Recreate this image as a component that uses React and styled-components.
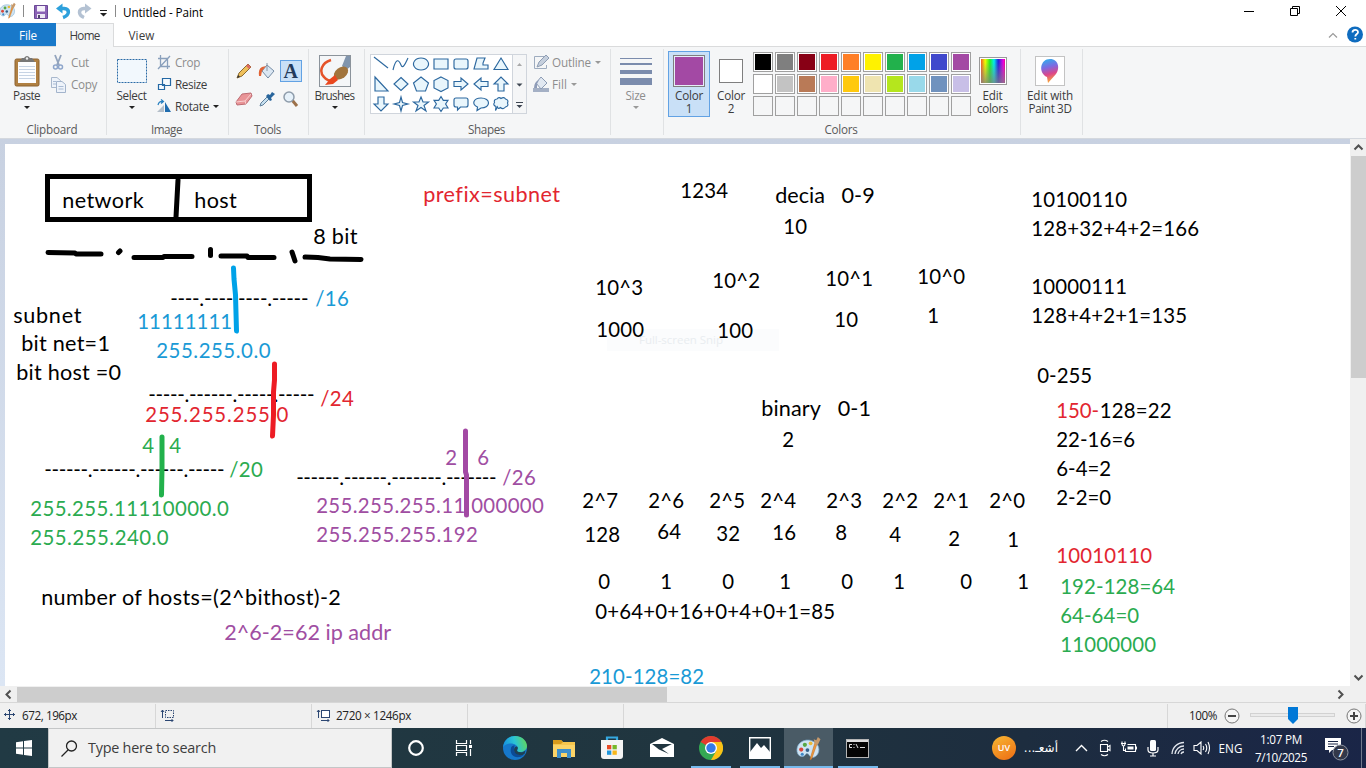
import React, { useLayoutEffect, useRef, useState } from "react";
import styled, { createGlobalStyle } from "styled-components";

const Global = createGlobalStyle`
  * { box-sizing: border-box; }
  body { margin: 0; overflow: hidden; background: #fff; }
  svg { flex: none; }
`;

const UI = `"Open Sans", "Noto Sans", sans-serif`;

/* ---------- text that is tracked to a given advance width ---------- */
const TextSpan = styled.span`
  display: inline-block;
  white-space: pre;
  flex: none;
`;
function Fit({ w, children }) {
  const ref = useRef(null);
  const [ls, setLs] = useState(0);
  useLayoutEffect(() => {
    if (!w) return;
    const el = ref.current;
    const natural = el.getBoundingClientRect().width;
    setLs((w - natural) / el.textContent.length);
  }, [w]);
  return <TextSpan ref={ref} style={w ? { letterSpacing: ls } : undefined}>{children}</TextSpan>;
}

/* ---------- window frame ---------- */
const Window = styled.div`
  width: 1366px;
  height: 768px;
  display: flex;
  flex-direction: column;
  font: 11.7px/14px ${UI};
  color: #333;
  background: #fff;
  overflow: hidden;
`;
const TitleBar = styled.header`
  height: 23px;
  flex: none;
  display: flex;
  align-items: center;
  color: #000;
`;
const QuickIcons = styled.div`
  width: 123px;
  height: 23px;
  flex: none;
`;
const Spacer = styled.div`flex: 1;`;
const Caption = styled.div`
  width: 46px;
  height: 22px;
  display: flex;
  align-items: center;
  justify-content: center;
`;
const TabRow = styled.nav`
  height: 24px;
  flex: none;
  display: flex;
  border-bottom: 1px solid #dadbdc;
`;
const Tab = styled.div`
  width: ${(p) => p.$w}px;
  height: ${(p) => (p.$kind === "home" ? 24 : 23)}px;
  display: flex;
  align-items: center;
  justify-content: center;
  color: ${(p) => (p.$kind === "file" ? "#fff" : "#3c3c3c")};
  background: ${(p) => (p.$kind === "file" ? "#1979ca" : p.$kind === "home" ? "#f5f6f7" : "#fff")};
  border: solid #dadbdc;
  border-width: ${(p) => (p.$kind === "home" ? "1px 1px 0 0" : "0")};
  padding-bottom: ${(p) => (p.$kind === "home" ? 2 : 0)}px;
`;
const TabTools = styled.div`
  display: flex;
  align-items: center;
`;

/* ---------- ribbon ---------- */
const Ribbon = styled.section`
  height: 91px;
  flex: none;
  display: flex;
  background: #f5f6f7;
  padding: 2px 0 3px;
`;
const Group = styled.div`
  width: ${(p) => p.$w}px;
  height: 86px;
  flex: none;
  display: flex;
  flex-direction: column;
  border-right: 1px solid #e0e2e4;
`;
const GroupBody = styled.div`
  height: 73px;
  display: flex;
  padding: ${(p) => p.$pad || "2px 0 0"};
`;
const GroupLabel = styled.div`
  height: 13px;
  line-height: 15px;
  display: flex;
  justify-content: center;
  padding-right: 2px;
  color: #5a5a5a;
`;
const BigButton = styled.div`
  width: ${(p) => p.$w}px;
  height: 66px;
  flex: none;
  display: flex;
  flex-direction: column;
  align-items: center;
  color: ${(p) => (p.$dim ? "#8d8d8d" : "#3c3c3c")};
  background: ${(p) => (p.$on ? "#c9e0f7" : "none")};
  border: ${(p) => (p.$on ? "1px solid #62a2e4" : "1px solid transparent")};
  line-height: 13px;
`;
const IconSlot = styled.div`
  height: 37px;
  flex: none;
  display: flex;
  align-items: center;
  justify-content: center;
`;
const Arrow = styled.i`
  width: 0;
  height: 0;
  flex: none;
  margin: ${(p) => p.$m || "4px 0 0"};
  border: 3px solid transparent;
  border-top: 3px solid ${(p) => p.$c || "#222"};
  border-bottom: 0;
`;
const Commands = styled.div`
  display: flex;
  flex-direction: column;
  margin-top: ${(p) => p.$up || 0}px;
`;
const Command = styled.div`
  height: 22px;
  display: flex;
  align-items: center;
  color: ${(p) => (p.$dim ? "#8d8d8d" : "#3c3c3c")};
`;
const CommandIcon = styled.div`
  width: ${(p) => p.$w}px;
  display: flex;
`;
const ToolGrid = styled.div`
  display: grid;
  grid-template-columns: repeat(3, 23.5px);
  grid-auto-rows: 28px;
`;
const ToolCell = styled.div`
  display: flex;
  align-items: center;
  justify-content: center;
`;
const TextTool = styled.div`
  width: 22px;
  height: 22px;
  flex: none;
  border: 1px solid #62a2e4;
  background: #c9e0f7;
  color: #233a5c;
  font: bold 20px/20px "Liberation Serif", serif;
  text-align: center;
`;
const Gallery = styled.div`
  width: 157px;
  height: 60px;
  flex: none;
  display: flex;
  border: 1px solid #d0d5dc;
  background: #fff;
`;
const ShapeGrid = styled.div`
  display: grid;
  grid-template-columns: repeat(7, 20px);
  grid-auto-rows: 20px;
  width: 141px;
  margin-top: -1px;
`;
const GalleryScroll = styled.div`
  width: 14px;
  border-left: 1px solid #d0d5dc;
  background: #f5f6f7;
  display: flex;
`;
const Preview = styled.div`
  width: ${(p) => p.$s}px;
  height: ${(p) => p.$s}px;
  border: 1px solid #7f7f7f;
  outline: ${(p) => (p.$ring ? "1px solid #e6eef8" : "none")};
  outline-offset: -2px;
  background: ${(p) => p.$c};
`;
const Palette = styled.div`
  display: grid;
  grid-template-columns: repeat(10, 20px);
  grid-auto-rows: 20px;
  gap: 2px;
  width: 218px;
  flex: none;
  padding-top: 1px;
`;
const Swatch = styled.div`
  border: 1px solid #a0a0a0;
  background: ${(p) => p.$c || "#f5f6f7"};
  box-shadow: inset 0 0 0 1px ${(p) => (p.$c ? "#fff" : "#f5f6f7")};
`;
const Spectrum = styled.div`
  width: 28px;
  height: 28px;
  border: 1px solid #999;
  box-shadow: inset 0 0 0 1px #fff;
  background:
    linear-gradient(to bottom, transparent 15%, #808080cc),
    linear-gradient(90deg, #e33, #ef0 20%, #2e2 38%, #0ee 54%, #22d 70%, #e0d 90%, #e05);
`;

/* ---------- workspace ---------- */
const Workspace = styled.main`
  height: 548px;
  flex: none;
  display: flex;
  border-top: 1px solid #d4d8de;
`;
const Desk = styled.div`
  width: 1350px;
  height: 547px;
  padding: 5px 0 0 5px;
  background: linear-gradient(#c8d1e1, #dce6f4);
`;
const Canvas = styled.div`
  position: relative;
  width: 1345px;
  height: 542px;
  background: #fff;
  overflow: hidden;
`;
const Note = styled.div`
  position: absolute;
  left: ${(p) => p.$x - 4.8}px;
  top: ${(p) => p.$b - 166}px;
  font: ${(p) => (p.$words ? 21.6 : 20.4)}px/29px Lato, sans-serif;
  color: ${(p) => p.$c || "#000"};
`;
const Ink = styled.svg`
  position: absolute;
  left: 0;
  top: 0;
`;
const SnipGhost = styled.div`
  position: absolute;
  left: 602px;
  top: 185px;
  width: 172px;
  height: 22px;
  padding-left: 32px;
  background: #fbfcfd;
  color: #e9edf0;
  font: 11.5px/22px ${UI};
`;
const VScroll = styled.div`
  width: 16px;
  height: 547px;
  background: #f0f0f0;
  display: flex;
  flex-direction: column;
  align-items: center;
`;
const VThumb = styled.div`
  width: 15px;
  height: 222px;
  background: #cdcdcd;
`;
const HScroll = styled.div`
  height: 16px;
  flex: none;
  display: flex;
  align-items: center;
  background: #f0f0f0;
`;
const HThumb = styled.div`
  width: 650px;
  height: 15px;
  background: #cdcdcd;
`;
const ArrowBox = styled.div`
  width: 17px;
  height: 17px;
  flex: none;
  display: flex;
  align-items: center;
  justify-content: center;
`;
const StatusBar = styled.footer`
  height: 26px;
  flex: none;
  display: flex;
  border-top: 1px solid #d7d7d7;
  background: #f0f0f0;
  color: #222;
`;
const StatusCell = styled.div`
  width: ${(p) => p.$w}px;
  height: 24px;
  margin-top: 1px;
  padding-bottom: 2px;
  display: flex;
  align-items: center;
  gap: ${(p) => p.$gap || 6}px;
  padding-left: ${(p) => p.$pl || 0}px;
  border-right: 1px solid #d7d7d7;
`;

/* ---------- taskbar ---------- */
const Taskbar = styled.div`
  height: 40px;
  flex: none;
  display: flex;
  color: #fff;
  background: linear-gradient(90deg, #213a44 0%, #20353f 50%, #1d2d3f 75%, #1a2547 100%);
`;
const Start = styled.div`
  width: 48px;
  display: flex;
  align-items: center;
  justify-content: center;
`;
const Search = styled.div`
  width: 344px;
  height: 40px;
  display: flex;
  align-items: center;
  gap: 10px;
  padding-left: 12px;
  border: 1px solid #c4c6c7;
  background: #f1f1f1;
  color: #3d3d3d;
  font: 14.4px/20px ${UI};
`;
const TaskButton = styled.div`
  width: ${(p) => p.$w}px;
  height: 40px;
  flex: none;
  display: flex;
  align-items: center;
  justify-content: center;
  background-color: ${(p) => (p.$active ? "#4a5b66" : "transparent")};
  background-image: ${(p) => (p.$run ? "linear-gradient(#76b9ed, #76b9ed)" : "none")};
  background-size: ${(p) => (p.$active ? "100%" : "40px")} 2px;
  background-position: center bottom;
  background-repeat: no-repeat;
`;
const Tray = styled.div`
  display: flex;
  height: 40px;
  align-items: center;
`;
const TrayItem = styled.div`
  width: ${(p) => p.$w}px;
  display: flex;
  justify-content: center;
`;
const Weather = styled.div`
  width: 24px;
  height: 24px;
  border-radius: 50%;
  background: linear-gradient(150deg, #f7b733, #ee6c13);
  font: 600 9px/24px ${UI};
  text-align: center;
`;
const Arabic = styled.div`
  width: 34px;
  margin: 0 11px 0 8px;
  font: 12px/18px "DejaVu Sans", sans-serif;
  white-space: nowrap;
`;
const Clock = styled.div`
  width: 64px;
  text-align: center;
  font: 11.7px/18px ${UI};
`;
const ShowDesktop = styled.div`
  width: 5px;
  height: 40px;
  border-left: 1px solid #71798c;
`;

const BLUE = "#00a2e8", RED = "#ed1c24", GREEN = "#22b14c", PURPLE = "#a349a4";
/* darker tints for the typed text */
const tb = "#1a9ad6", tr = "#e22630", tg = "#2bab50", tp = "#a04ea2";

/* text, x, baseline, width, colour */
const D = 11.9;
const NOTES = [
  ["network", 62, 208, 82], ["host", 194, 208, 43], ["8 bit", 313, 244, 44.5],
  ["prefix=subnet", 423, 202, 137, tr],
  ["----.---- ----.-----", 170, 306, 138], ["/16", 315, 306, 34, tb],
  ["11111111", 137, 329, 95, tb], ["255.255.0.0", 156, 358, 115, tb],
  ["subnet", 13, 323, 69], ["bit net=1", 21, 351, 89], ["bit host =0", 16, 380, 105],
  ["-----.------.-----.-----", 148, 402, 166], ["/24", 320, 406, 34, tr],
  ["255.255.255.0", 145, 422, 144, tr],
  ["4", 142, 453, D, tg], ["4", 169, 453, D, tg],
  ["------.------.------.-----", 44, 477, 180], ["/20", 229, 477, 34, tg],
  ["255.255.11110000.0", 30, 516, 199, tg], ["255.255.240.0", 30, 545, 139, tg],
  ["2", 445, 465, D, tp], ["6", 477, 465, D, tp],
  ["------.------.-------.-------", 296, 485, 200], ["/26", 502, 485, 34, tp],
  ["255.255.255.11 000000", 316, 513, 228, tp], ["255.255.255.192", 316, 542, 162, tp],
  ["number of hosts=(2^bithost)-2", 41, 605, 300], ["2^6-2=62 ip addr", 224, 640, 167, tp],
  ["1234", 680, 198, 48], ["decia   0-9", 775, 203, 99.5], ["10", 783, 234, 24],
  ["10^3", 595, 295, 48], ["10^2", 712, 288, 48], ["10^1", 825, 286, 48], ["10^0", 917, 284, 48],
  ["1000", 596, 337, 48], ["100", 717, 338, 36], ["10", 834, 327, 24], ["1", 927, 323, D],
  ["binary   0-1", 761, 416, 110], ["2", 782, 447, D],
  ["2^7", 582, 508, 36], ["2^6", 648, 508, 36], ["2^5", 709, 508, 36], ["2^4", 760, 508, 36],
  ["2^3", 826, 508, 36], ["2^2", 882, 508, 36], ["2^1", 933, 508, 36], ["2^0", 989, 508, 36],
  ["128", 584, 542, 36], ["64", 657, 539, 24], ["32", 716, 541, 24], ["16", 772, 540, 24],
  ["8", 835, 540, D], ["4", 889, 542, D], ["2", 948, 546, D], ["1", 1007, 547, D],
  ["0", 598, 589, D], ["1", 660, 589, D], ["0", 722, 589, D], ["1", 779, 589, D],
  ["0", 841, 589, D], ["1", 893, 589, D], ["0", 960, 589, D], ["1", 1017, 589, D],
  ["0+64+0+16+0+4+0+1=85", 595, 619, 240], ["210-128=82", 589, 684, 115, tb],
  ["10100110", 1031, 207, 96], ["128+32+4+2=166", 1031, 236, 168],
  ["10000111", 1031, 294, 96], ["128+4+2+1=135", 1031, 323, 156],
  ["0-255", 1037, 383, 55], ["150-", 1056, 418, 43, tr], ["128=22", 1099.5, 418, 72],
  ["22-16=6", 1056, 447, 79], ["6-4=2", 1056, 476, 55], ["2-2=0", 1056, 505, 55],
  ["10010110", 1056, 563, 96, tr], ["192-128=64", 1060, 594, 115, tg],
  ["64-64=0", 1060, 623, 79, tg], ["11000000", 1060, 652, 96, tg],
];

const STROKES = [
  ["#000", "M178 180 L176 217"], ["#000", "M48 252.5 L75 253 76 254 101 254"],
  ["#000", "M118.5 252.5 L120 251"], ["#000", "M134 257.5 L163 257.5 164 256.5 192 256.5"],
  ["#000", "M210.5 249.5 V255.5"], ["#000", "M221 256 H247 L248 257.5 H274"],
  ["#000", "M292 252 L295 261"], ["#000", "M305 257 L318 257.5 330 259 361 259.5"],
  [BLUE, "M233.5 268 L234 279 235.5 295 236.5 331"], [RED, "M274.5 364 V380 L273.5 392 V415 L272.5 436"],
  [GREEN, "M162 437 V468 L161.5 495"], [PURPLE, "M465.5 431 V472 L466.5 475 V515"],
];

const SHAPES = [
  "M3 3 L17 14", "M2 16 C5 3 8 6 10 11 S15 8 17 4", "M10 4 a7.5 6 0 1 0 .01 0Z", "M3 5 H17 V15 H3Z",
  "M5 5 H15 Q17 5 17 7 V13 Q17 15 15 15 H5 Q3 15 3 13 V7 Q3 5 5 5Z", "M6 4 H14 L12 9 V11 H17 V15 H3Z", "M10 4 L17 15.5 H3Z",
  "M4 3 L17 17 H4Z", "M10 3.5 L17 10 L10 16.5 L3 10Z", "M10 3 L17.5 9 L14.5 17 H5.5 L2.5 9Z",
  "M10 3 L17 6.5 V14 L10 17.5 L3 14 V6.5Z", "M3 7.5 H10 V4 L17 10 L10 16 V12.5 H3Z",
  "M17 7.5 H10 V4 L3 10 L10 16 V12.5 H17Z", "M7 17 V10 H3 L10 3 L17 10 H13 V17Z",
  "M7 3 V10 H3 L10 17 L17 10 H13 V3Z", "M10 3 L11.5 8.5 L17 10 L11.5 11.5 L10 17 L8.5 11.5 L3 10 L8.5 8.5Z",
  "M10 3 L12 8 H17.5 L13 11.5 L15 17 L10 13.5 L5 17 L7 11.5 L2.5 8 H8Z",
  "M10 2.5 L12.3 6.3 H17 L14.6 10 L17 14 H12.3 L10 17.5 L7.7 14 H3 L5.4 10 L3 6.3 H7.7Z",
  "M5 4 H15 Q17 4 17 6 V11 Q17 13 15 13 H9.5 L6.5 16 V13 H5 Q3 13 3 11 V6 Q3 4 5 4Z",
  "M10 4 C20 4 20 14 10 14 L6 16.5 L6.5 13 C0 10.5 2.5 4 10 4Z",
  "M6 5 Q8 2.5 10 4.5 Q13 2.5 14.5 5 Q18 6 16.5 9 Q18 12 14.5 13 Q12 16 9.5 13.5 Q7 15.5 6.5 13 L4.5 16.5 L5 12.5 Q1.5 11 3.5 8.5 Q2.5 5.5 6 5Z",
];

const COLORS = [
  "#000", "#7f7f7f", "#880015", "#ed1c24", "#ff7f27", "#fff200", "#22b14c", "#00a2e8", "#3f48cc", "#a349a4",
  "#fff", "#c3c3c3", "#b97a57", "#ffaec9", "#ffc90e", "#efe4b0", "#b5e61d", "#99d9ea", "#7092be", "#c8bfe7",
  ...Array(10).fill(null),
];

const PaletteIcon = ({ s = 24 }) => (
  <svg width={s} height={s} viewBox="0 0 24 24">
    <path d="M13 4C5 3 0 9 1 15c1 5 6 6 8 3 1-2 3-1 4 1 3 4 9 0 9-6 0-5-4-8-9-9Z" fill="#cfe4f3" stroke="#7aa9cc" strokeWidth=".7" />
    <circle cx="5" cy="13" r="2" fill="#d9463b" /><circle cx="8.500" cy="8.500" r="2" fill="#58a846" />
    <circle cx="14" cy="7" r="1.800" fill="#e9b93a" /><circle cx="11" cy="13.500" r="1.800" fill="#35618d" />
    <circle cx="6" cy="17.500" r="1.500" fill="#3f86c5" />
    <path d="M20 8 L15 22 L13.500 23 L13.800 21 L18 7Z" fill="#f0993c" stroke="#b86a24" strokeWidth=".5" />
    <path d="M18 8 L17 3 L19.500 4 L21 1 L23.500 3 L21 8.500Z" fill="#c79a6b" />
  </svg>
);

const Chevron = ({ d }) => (
  <svg width="11" height="11" viewBox="0 0 11 11"><path d={d} fill="none" stroke="#505050" strokeWidth="2" /></svg>
);

function TopBar() {
  return (
    <TitleBar>
      <QuickIcons>
        <svg width="123" height="23">
          <g transform="translate(-1,2)"><PaletteIcon s={17} /></g>
          <path d="M23.500 5V17M115.500 5V17" stroke="#8a8a8a" />
          <path d="M34.500 5.500H47.500V18.500H34.500Z" fill="#8b62b5" stroke="#6a4795" />
          <path d="M37 6H45V11.500H37Z" fill="#f4f0fa" /><path d="M37 14H45V18H37Z" fill="#ece7f3" /><path d="M38 15H40V18H38Z" fill="#50456b" />
          <path d="M60 8.500H64C70 9 70 15 63 17.500" fill="none" stroke="#2da0dc" strokeWidth="3.500" />
          <path d="M62.500 3.500V13.500L56 8.500Z" fill="#2da0dc" />
          <path d="M87 8.500H84C78 9 78 15 84 17.500" fill="none" stroke="#b4c2d3" strokeWidth="3.500" />
          <path d="M85 3.500V13.500L91.500 8.500Z" fill="#b4c2d3" />
          <path d="M100 10.500H107" stroke="#222" /><path d="M100 13H107L103.500 16.500Z" fill="#222" />
        </svg>
      </QuickIcons>
      <Fit w={80}>Untitled - Paint</Fit>
      <Spacer />
      <Caption><svg width="12" height="12"><path d="M1 5.500H11" fill="none" stroke="#000" /></svg></Caption>
      <Caption><svg width="12" height="12"><path d="M1.500 2.500H8.500V9.500H1.500ZM3.500 2.500V.500H10.500V7.500H8.500" fill="none" stroke="#000" /></svg></Caption>
      <Caption><svg width="12" height="12"><path d="M1 0L11 10M11 0L1 10" fill="none" stroke="#000" /></svg></Caption>
      <svg width="2" height="2" />
    </TitleBar>
  );
}

function Tabs() {
  return (
    <TabRow>
      <Tab $w={56} $kind="file"><Fit w={18}>File</Fit></Tab>
      <Tab $w={58} $kind="home"><Fit w={30}>Home</Fit></Tab>
      <Tab $w={55}><Fit w={26}>View</Fit></Tab>
      <Spacer />
      <TabTools>
        <svg width="40" height="22">
          <path d="M3 13.500L7 9.500L11 13.500" fill="none" stroke="#9a9a9a" strokeWidth="1.200" />
          <circle cx="29" cy="10.500" r="8" fill="#0f6cbf" />
          <path d="M26.500 8.500C26.500 5 32 5 32 8.200C32 10 29.300 10 29.300 12.500M29.300 14V15.500" fill="none" stroke="#fff" strokeWidth="1.800" />
        </svg>
      </TabTools>
    </TabRow>
  );
}

function RibbonBar() {
  return (
    <Ribbon>
      <Group $w={107}>
        <GroupBody $pad="2px 0 0 5px">
          <BigButton $w={43}>
            <IconSlot>
              <svg width="26" height="32">
                <rect x="1" y="4" width="24" height="27" rx="1.500" fill="#b08042" stroke="#8c6230" />
                <path d="M4 7H22V28H4Z" fill="#fcfdff" /><path d="M5 11.500H21M5 14.500H21M5 17.500H21M5 20.500H21M5 23.500H21" stroke="#c6d3e4" />
                <path d="M5 7L8 3H10Q13 -1 16 3H18L21 7Z" fill="#777" /><circle cx="13" cy="3.500" r="1.200" fill="#eee" />
              </svg>
            </IconSlot>
            <Fit w={27}>Paste</Fit><Arrow />
          </BigButton>
          <Commands>
            <Command $dim><CommandIcon $w={23}>
              <svg width="17" height="17"><path d="M7 1L11 11M13 1L9 11" stroke="#93a4bd" strokeWidth="1.800" /><circle cx="7.500" cy="13" r="2" fill="none" stroke="#8fa6cb" strokeWidth="1.500" /><circle cx="12.500" cy="13" r="2" fill="none" stroke="#8fa6cb" strokeWidth="1.500" /></svg>
            </CommandIcon><Fit w={18}>Cut</Fit></Command>
            <Command $dim><CommandIcon $w={23}>
              <svg width="18" height="17"><path d="M3.500 1.500H9L12.500 4.500V11.500H3.500Z" fill="#eef3fa" stroke="#a9b8cd" /><path d="M8.500 5.500H14L17.500 8.500V16.500H8.500Z" fill="#eef3fa" stroke="#a3b4cc" /><path d="M5 5.500H8M5 8H8M10.500 10.500H15.500M10.500 13H15.500" stroke="#a9bbd4" /></svg>
            </CommandIcon><Fit w={26}>Copy</Fit></Command>
          </Commands>
        </GroupBody>
        <GroupLabel><Fit w={51}>Clipboard</Fit></GroupLabel>
      </Group>

      <Group $w={122}>
        <GroupBody $pad="2px 0 0 3px">
          <BigButton $w={43}>
            <IconSlot><svg width="32" height="26"><rect x="1.500" y="1.500" width="29" height="23" fill="#f2f8fd" stroke="#2a6aa6" strokeDasharray="2 1" /></svg></IconSlot>
            <Fit w={30}>Select</Fit><Arrow />
          </BigButton>
          <Commands>
            <Command $dim><CommandIcon $w={22}><svg width="20" height="16"><path d="M7.500 1V12.500H17M5 4.500H14.500V15M5 15L17 2" fill="none" stroke="#8aa0bc" strokeWidth="1.300" /></svg></CommandIcon><Fit w={25}>Crop</Fit></Command>
            <Command><CommandIcon $w={22}><svg width="20" height="16"><path d="M9.500 2.500H17.500V9.500H9.500ZM5.500 8.500H11.500V13.500H5.500Z" fill="#f3f9fe" stroke="#2468a4" strokeWidth="1.200" /></svg></CommandIcon><Fit w={32}>Resize</Fit></Command>
            <Command><CommandIcon $w={22}><svg width="20" height="16"><path d="M11 14H4L11 7Z" fill="#b5bfca" /><path d="M12 14V4L18 14Z" fill="#206cae" /><path d="M5 7Q6 3 10 3.500M8 1.500L10.500 3.500L8 5.500" fill="none" stroke="#2980c0" strokeWidth="1.200" /></svg></CommandIcon><Fit w={34}>Rotate</Fit><Arrow $m="0 0 0 4px" /></Command>
          </Commands>
        </GroupBody>
        <GroupLabel><Fit w={31}>Image</Fit></GroupLabel>
      </Group>

      <Group $w={80}>
        <GroupBody $pad="8px 0 0 3px">
          <ToolGrid>
            <ToolCell><svg width="18" height="18"><path d="M2 16L4 11L13 2L16 5L7 14Z" fill="#efc05b" stroke="#8b6a31" /><path d="M2 16L3.300 13L5 14.700Z" fill="#333" /><path d="M13 2L16 5L14 7L11 4Z" fill="#dc6b62" /></svg></ToolCell>
            <ToolCell><svg width="18" height="18"><path d="M9 3L16 9L10 16L4 9Z" fill="#dbe7f3" stroke="#758ca5" /><path d="M1 14Q0 7 4 5L8 4L4 9L3 14Z" fill="#e26335" /><path d="M9 1V9" stroke="#8996a5" /></svg></ToolCell>
            <ToolCell><TextTool>A</TextTool></ToolCell>
            <ToolCell><svg width="18" height="18"><path d="M1 12L7 4L16 3L17 6L11 14L2 15Z" fill="#e99497" stroke="#bd6b72" /><path d="M1 12L10 11L11 14M10 11L16 4" fill="none" stroke="#f8cfd0" /></svg></ToolCell>
            <ToolCell><svg width="18" height="18"><path d="M2 16L3 13L9 7L11 9L5 15Z" fill="#c7e0f0" stroke="#60809c" /><path d="M8 6L10 4L12 5L14 2L17 4L13 8L14 10L12 11Z" fill="#28659c" /></svg></ToolCell>
            <ToolCell><svg width="18" height="18"><path d="M10 10L15 16" stroke="#9c714a" strokeWidth="3" /><circle cx="7" cy="7" r="5" fill="#e6f1fa" stroke="#8e9cab" strokeWidth="1.500" /></svg></ToolCell>
          </ToolGrid>
        </GroupBody>
        <GroupLabel><Fit w={27}>Tools</Fit></GroupLabel>
      </Group>

      <Group $w={56}>
        <GroupBody $pad="2px 0 0 3px">
          <BigButton $w={45}>
            <IconSlot>
              <svg width="32" height="32"><rect x=".5" y=".5" width="31" height="31" fill="#f4f6f8" stroke="#8b939b" />
                <path d="M12 5C2 8 0 17 5 22C8 26 13 26 15 26" fill="none" stroke="#e5532a" strokeWidth="2.500" />
                <path d="M23 11L27 1H31V12L27 15Z" fill="#8195ad" /><ellipse cx="22" cy="18" rx="8" ry="5.500" transform="rotate(-38 22 18)" fill="#a1743d" /><path d="M6 30L11 24L16 20L19 25L14 29Z" fill="#e9471f" />
              </svg>
            </IconSlot>
            <Fit w={40}>Brushes</Fit><Arrow />
          </BigButton>
        </GroupBody>
      </Group>

      <Group $w={246}>
        <GroupBody $pad="5px 0 0 5px">
          <Gallery>
            <ShapeGrid>
              {SHAPES.map((d, i) => (
                <svg key={i} width="20" height="20"><path d={d} fill={i < 2 ? "none" : "#e9f6fc"} stroke="#2c689f" strokeWidth="1.150" /></svg>
              ))}
            </ShapeGrid>
            <GalleryScroll>
              <svg width="13" height="58"><path d="M4 11H9L6.500 8Z" fill="#a9a9a9" /><path d="M3.500 28.500H9.500L6.500 31.500ZM3.500 50H9.500L6.500 53Z" fill="#3e4652" /><path d="M3 47.500H10" stroke="#3e4652" /></svg>
            </GalleryScroll>
          </Gallery>
          <Commands $up={-3}>
            <Command $dim><CommandIcon $w={25}><svg width="25" height="18"><path d="M7.500 3.500H17M7.500 3.500V15.500H19.500V12" fill="none" stroke="#9eacbf" /><path d="M10 14L12 9L19 2L22 5L15 12Z" fill="#c5cfdd" stroke="#8e9db3" /></svg></CommandIcon><Fit w={39}>Outline</Fit><Arrow $m="0 0 0 4px" $c="#999" /></Command>
            <Command $dim><CommandIcon $w={25}><svg width="25" height="18"><path d="M6 13H22V17H6Z" fill="#a4b0c5" /><path d="M14 2L20 8L14 14L9 8Z" fill="#e1e8f1" stroke="#8b9bb4" /><path d="M7 13Q7 7 12 5L10 9V13Z" fill="#8e9cb8" /></svg></CommandIcon><Fit w={15}>Fill</Fit><Arrow $m="0 0 0 4px" $c="#999" /></Command>
          </Commands>
        </GroupBody>
        <GroupLabel><Fit w={37}>Shapes</Fit></GroupLabel>
      </Group>

      <Group $w={53}>
        <GroupBody $pad="2px 0 0 3px">
          <BigButton $w={43} $dim>
            <IconSlot><svg width="32" height="30"><path d="M0 2.500H32" stroke="#7b8cad" /><path d="M0 8H32" stroke="#7b8cad" strokeWidth="2" /><path d="M0 16H32" stroke="#7b8cad" strokeWidth="4" /><path d="M0 25.500H32" stroke="#7b8cad" strokeWidth="7" /></svg></IconSlot>
            <Fit w={20}>Size</Fit><Arrow $c="#999" />
          </BigButton>
        </GroupBody>
      </Group>

      <Group $w={357}>
        <GroupBody $pad="2px 0 0 4px">
          <BigButton $w={42} $on>
            <IconSlot><Preview $s={32} $ring $c="#a349a4" /></IconSlot>
            <Fit w={28}>Color</Fit><Fit>1</Fit>
          </BigButton>
          <BigButton $w={42}>
            <IconSlot><Preview $s={24} $c="#fff" /></IconSlot>
            <Fit w={28}>Color</Fit><Fit>2</Fit>
          </BigButton>
          <svg width="1" height="1" />
          <Palette>{COLORS.map((c, i) => <Swatch key={i} $c={c} />)}</Palette>
          <BigButton $w={43}>
            <IconSlot><Spectrum /></IconSlot>
            <Fit w={20}>Edit</Fit><Fit w={31}>colors</Fit>
          </BigButton>
        </GroupBody>
        <GroupLabel><Fit w={33}>Colors</Fit></GroupLabel>
      </Group>

      <Group $w={62}>
        <GroupBody $pad="2px 0 0 0">
          <BigButton $w={58}>
            <IconSlot>
              <svg width="30" height="30"><defs>
                <linearGradient id="drop" x1="0" y1="0" x2=".2" y2="1"><stop offset="0" stopColor="#25b8ef" /><stop offset=".4" stopColor="#7c6be2" /><stop offset=".7" stopColor="#dc468b" /><stop offset="1" stopColor="#f6a13d" /></linearGradient></defs>
                <rect x=".5" y=".5" width="29" height="29" fill="#fff" stroke="#c3c3c3" /><path d="M15 3C24 3 25 13 21 18L13 27L12 21C3 17 5 3 15 3Z" fill="url(#drop)" />
              </svg>
            </IconSlot>
            <Fit w={46}>Edit with</Fit><Fit w={43}>Paint 3D</Fit>
          </BigButton>
        </GroupBody>
      </Group>
    </Ribbon>
  );
}

function Drawing() {
  return (
    <Canvas>
      <SnipGhost><Fit w={84}>Full-screen Snip</Fit></SnipGhost>
      {NOTES.map(([t, x, b, w, c], i) => (
        <Note key={i} $x={x} $b={b} $c={c} $words={/[a-z]/.test(t)}><Fit w={w}>{t}</Fit></Note>
      ))}
      <Ink width="1345" height="542" viewBox="5 144 1345 542">
        <rect x="47.500" y="176.500" width="262" height="43" fill="none" stroke="#000" strokeWidth="5" />
        {STROKES.map(([c, d], i) => (
          <path key={i} d={d} fill="none" stroke={c} strokeWidth="5" strokeLinecap="round" strokeLinejoin="round" />
        ))}
      </Ink>
    </Canvas>
  );
}

function Status() {
  return (
    <StatusBar>
      <StatusCell $w={156} $pl={4}>
        <svg width="12" height="12"><path d="M5.500 0V11M0 5.500H11M4 1.500H7M4 9.500H7M1.500 4V7M9.500 4V7" stroke="#2b4672" fill="none" /></svg>
        <Fit w={55}>672, 196px</Fit>
      </StatusCell>
      <StatusCell $w={156} $pl={4}>
        <svg width="15" height="13"><path d="M2.500 1V9M1 3L2.500 1L4 3" stroke="#2b4672" fill="none" /><rect x="5.500" y="1.500" width="8" height="7" fill="none" stroke="#2b4672" strokeDasharray="1.500 1" /><path d="M5 11.500H13M11.500 10L13 11.500L11.500 13" stroke="#2b4672" fill="none" /></svg>
      </StatusCell>
      <StatusCell $w={156} $pl={4} $gap={5}>
        <svg width="15" height="13"><path d="M2.500 1V9M1 3L2.500 1L4 3" stroke="#2b4672" fill="none" /><rect x="5.500" y="1.500" width="8" height="7" fill="#fff" stroke="#2b4672" /><path d="M5 11.500H13M11.500 10L13 11.500L11.500 13" stroke="#2b4672" fill="none" /></svg>
        <Fit w={75}>2720 × 1246px</Fit>
      </StatusCell>
      <StatusCell $w={156} />
      <StatusCell $w={544} />
      <StatusCell $w={198} $pl={21} $gap={7}>
        <Fit w={28}>100%</Fit>
        <svg width="140" height="22">
          <circle cx="8" cy="12" r="7" fill="#f5f5f5" stroke="#777" /><path d="M4 12H12" stroke="#444" strokeWidth="2" />
          <rect x="26.500" y="9.500" width="84" height="3" fill="#ebebeb" stroke="#d2d2d2" />
          <path d="M64 3H74V15L69 20L64 15Z" fill="#0078d7" />
          <circle cx="130" cy="12" r="7" fill="#f5f5f5" stroke="#777" /><path d="M126 12H134M130 8V16" stroke="#444" strokeWidth="2" />
        </svg>
      </StatusCell>
    </StatusBar>
  );
}

function Bar() {
  return (
    <Taskbar>
      <Start><svg width="16" height="16"><path d="M0 2.200L7 1.200V7.500H0ZM8 1L16 0V7.500H8ZM0 8.500H7V14.800L0 13.800ZM8 8.500H16V16L8 15Z" fill="#fff" /></svg></Start>
      <Search>
        <svg width="17" height="17"><circle cx="10.500" cy="6" r="5" fill="none" stroke="#222" strokeWidth="1.300" /><path d="M7 10L.500 16.500" stroke="#222" strokeWidth="1.300" /></svg>
        <Fit w={128}>Type here to search</Fit>
      </Search>
      <TaskButton $w={48}><svg width="18" height="18"><circle cx="9" cy="9" r="6.800" fill="none" stroke="#fff" strokeWidth="2.200" /></svg></TaskButton>
      <TaskButton $w={48}><svg width="18" height="18"><path d="M1.500 1V4.500H11.500V1M1.500 17V13.500H11.500V17M1.500 6.500H11.500V11.500H1.500ZM15.500 1V5M15.500 10V17" fill="none" stroke="#fff" strokeWidth="1.200" /><rect x="14" y="6" width="3" height="3" fill="#fff" /></svg></TaskButton>
      <TaskButton $w={53}>
        <svg width="24" height="24"><defs>
          <linearGradient id="e1" x1="0" y1=".5" x2="1" y2=".3"><stop offset="0" stopColor="#1690e0" /><stop offset=".5" stopColor="#2bc4d4" /><stop offset="1" stopColor="#62d75a" /></linearGradient></defs>
          <circle cx="12" cy="12" r="12" fill="#1678cb" />
          <path d="M0 11C1 4 6 0 12 0C20 0 24 6 24 10C24 14 20 16 17 16C13 16 14 14 15 13C15 7 5 5 0 11Z" fill="url(#e1)" />
          <path d="M8 12C6 20 14 24 21 19C17 20 12 18 11 14C10.500 11 12 9.500 12 9.500C10 9.500 8.500 10 8 12Z" fill="#0b4b96" />
          <path d="M11 14C11 11 13 10 14 10.500C15.500 11.500 14.500 13 14 14C14 16 17 16.500 20 16L22.500 14.500L21.500 18C17 21 11.500 18 11 14Z" fill="#20363f" opacity=".85" />
        </svg>
      </TaskButton>
      <TaskButton $w={46}><svg width="22" height="19"><path d="M0 1H8L10 3H22V18H0Z" fill="#f7c64d" /><path d="M0 1H8L10 3L8 5H0Z" fill="#d99b1c" /><path d="M0 6H22V18H0Z" fill="#fcd467" /><path d="M4 10H18V19H14V14H8V19H4Z" fill="#3e8fcb" /></svg></TaskButton>
      <TaskButton $w={50}><svg width="24" height="24"><path d="M7 5V1.500H17V5" fill="none" stroke="#35a8e0" strokeWidth="2.200" /><path d="M1 4H23V20Q23 23 20 23H4Q1 23 1 20Z" fill="#f4f4f4" /><path d="M7 9H11.300V13.300H7Z" fill="#e94b26" /><path d="M12.500 9H16.800V13.300H12.500Z" fill="#76b82a" /><path d="M7 14.500H11.300V18.800H7Z" fill="#2096dc" /><path d="M12.500 14.500H16.800V18.800H12.500Z" fill="#f7b61a" /></svg></TaskButton>
      <TaskButton $w={49}><svg width="24" height="20"><path d="M0 6L12 0L24 6V19H0Z" fill="#fff" /><path d="M2 6H22L12 11L19 16L9 11.500Z" fill="#20353f" /></svg></TaskButton>
      <TaskButton $w={49} $run>
        <svg width="24" height="24"><circle cx="12" cy="12" r="12" fill="#34a853" /><path d="M12 12L1.600 6A12 12 0 0 1 22.400 6Z" fill="#e33b2e" /><path d="M12 6H22.400A12 12 0 0 1 12 24L17.200 15Z" fill="#fbc116" /><circle cx="12" cy="12" r="6" fill="#fff" /><circle cx="12" cy="12" r="4.700" fill="#357ae8" /></svg>
      </TaskButton>
      <TaskButton $w={49} $run><svg width="22" height="22"><path d="M.700 .700H21.300V21.300H.700Z" fill="none" stroke="#fff" strokeWidth="1.400" /><path d="M1 19V15L8 6L12 11L15 8L21 15V21H1Z" fill="#fff" /></svg></TaskButton>
      <TaskButton $w={49} $run $active><PaletteIcon s={25} /></TaskButton>
      <TaskButton $w={49} $run><svg width="23" height="19"><rect x=".500" y=".500" width="22" height="18" fill="#050505" stroke="#b5b5b5" /><path d="M1 2H22" stroke="#ddd" strokeWidth="2" /><path d="M6 5.500H3.500V8.500H6M8 5V6M8 8V9M10 5L12 9M14 8.500H19" fill="none" stroke="#ddd" /></svg></TaskButton>
      <Spacer />
      <Tray>
        <Weather>UV</Weather>
        <Arabic dir="rtl">أشعـ...</Arabic>
        <TrayItem $w={24}><svg width="13" height="8"><path d="M1 7L6.500 1.500L12 7" fill="none" stroke="#fff" strokeWidth="1.400" /></svg></TrayItem>
        <TrayItem $w={24}><svg width="12" height="18"><path d="M1.500 5.500H8.500V12.500H1.500ZM8.500 8L11 6.500V11.500L8.500 10M2 2.500Q5.500 0 9 2.500M2 15.500Q5.500 18 9 15.500" fill="none" stroke="#fff" strokeWidth="1.100" /></svg></TrayItem>
        <TrayItem $w={24}><svg width="16" height="14"><path d="M6.500 3.500H14.500V10.500H4.500V7.500M15.500 5.500V8.500M0 2.500H5M1 .5V2.500Q1 5 2.500 5Q4 5 4 2.500V.5M2.500 5V9.500H4.500" fill="none" stroke="#fff" strokeWidth="1.100" /><path d="M6.500 5.500H12.500V8.500H6.500Z" fill="#fff" /></svg></TrayItem>
        <TrayItem $w={23}><svg width="12" height="17"><rect x="3" y="0" width="6" height="11" rx="1.500" fill="#fff" /><path d="M1 7V10Q1 13 6 13Q11 13 11 10V7M6 13V16M3 16H9" fill="none" stroke="#fff" strokeWidth="1.200" /></svg></TrayItem>
        <TrayItem $w={27}><svg width="14" height="14"><path d="M1 13A12 12 0 0 1 13 1.500M4 13A9 9 0 0 1 13 5M7 13A6 6 0 0 1 13 8M10 13A3 3 0 0 1 13 11" fill="none" stroke="#e3e7ee" strokeWidth="1.300" /></svg></TrayItem>
        <TrayItem $w={21}><svg width="18" height="14"><path d="M1 4.500H4L8 1V13L4 9.500H1ZM10 5Q11.500 7 10 9M12.500 3Q15 7 12.500 11M15 1Q18 7 15 13" fill="none" stroke="#fff" strokeWidth="1.100" /></svg></TrayItem>
        <TrayItem $w={37}><Fit w={24}>ENG</Fit></TrayItem>
        <Clock><div><Fit w={42}>1:07 PM</Fit></div><div><Fit w={52}>7/10/2025</Fit></div></Clock>
        <TrayItem $w={48}>
          <svg width="26" height="26"><path d="M1 3H17V15H8L5 18V15H1Z" fill="#fff" /><path d="M4 6.500H14M4 9H14M4 11.500H10" stroke="#1a2747" /><circle cx="16.500" cy="17.500" r="7.500" fill="#32384a" stroke="#8d93a0" /><text x="16.500" y="21.500" textAnchor="middle" fill="#fff" fontSize="11.500" fontWeight="600" fontFamily="Open Sans, sans-serif">7</text></svg>
        </TrayItem>
        <ShowDesktop />
      </Tray>
    </Taskbar>
  );
}

export default function App() {
  return (
    <>
      <Global />
      <Window>
        <TopBar />
        <Tabs />
        <RibbonBar />
        <Workspace>
          <Desk><Drawing /></Desk>
          <VScroll>
            <ArrowBox><Chevron d="M1.500 7.500L5.500 3.500L9.500 7.500" /></ArrowBox>
            <VThumb />
            <Spacer />
            <ArrowBox><Chevron d="M1.500 3.500L5.500 7.500L9.500 3.500" /></ArrowBox>
          </VScroll>
        </Workspace>
        <HScroll>
          <ArrowBox><Chevron d="M7.500 1.500L3.500 5.500L7.500 9.500" /></ArrowBox>
          <HThumb />
          <Spacer />
          <ArrowBox><Chevron d="M3.500 1.500L7.500 5.500L3.500 9.500" /></ArrowBox>
          <ArrowBox />
        </HScroll>
        <Status />
        <Bar />
      </Window>
    </>
  );
}
